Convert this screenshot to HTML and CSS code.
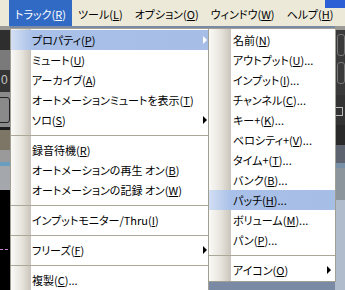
FILE: index.html
```html
<!DOCTYPE html>
<html lang="ja">
<head>
  <meta charset="UTF-8" />
  <title>トラック メニュー</title>
  <link rel="stylesheet" href="styles.css">
</head>
<body>
  <div class="screen">
    <div class="title-corner"></div>

    <div class="menubar">
      <span class="menubar-item active">トラック(<u>R</u>)</span>
      <span class="menubar-item">ツール(<u>L</u>)</span>
      <span class="menubar-item">オプション(<u>O</u>)</span>
      <span class="menubar-item">ウィンドウ(<u>W</u>)</span>
      <span class="menubar-item">ヘルプ(<u>H</u>)</span>
    </div>

    <div class="workspace">
      <!-- bits of the track view showing round the menus -->
      <div class="strip strip-left">
        <div class="band l1"></div>
        <div class="band l2"></div>
        <div class="band l3"></div>
        <div class="band l4"><span class="digit">0</span></div>
        <div class="band l5"><div class="knob"></div></div>
        <div class="band l6"></div>
        <div class="band l7"></div>
        <div class="band l8"></div>
        <div class="band l9"></div>
        <div class="band l10"></div>
        <div class="band l11"><div class="dash"></div></div>
      </div>
      <div class="strip-mid"></div>
      <div class="strip strip-right">
        <div class="band r1"></div>
        <div class="band r2"><div class="knob"></div><div class="knob"></div></div>
        <div class="band r3"><div class="box"></div></div>
        <div class="band r4"></div>
        <div class="band r5"></div>
        <div class="band r6"></div>
        <div class="band r7"></div>
        <div class="band r8"></div>
      </div>

      <!-- Track menu -->
      <div class="menu menu-main">
        <div class="item hl">プロパティ(<u>P</u>)<span class="arrow"></span></div>
        <div class="item">ミュート(<u>U</u>)</div>
        <div class="item">アーカイブ(<u>A</u>)</div>
        <div class="item">オートメーションミュートを表示(<u>T</u>)</div>
        <div class="item">ソロ(<u>S</u>)<span class="arrow"></span></div>
        <div class="sep"></div>
        <div class="item">録音待機(<u>R</u>)</div>
        <div class="item">オートメーションの再生 オン(<u>B</u>)</div>
        <div class="item">オートメーションの記録 オン(<u>W</u>)</div>
        <div class="sep"></div>
        <div class="item">インプットモニター/Thru(<u>I</u>)</div>
        <div class="sep"></div>
        <div class="item">フリーズ(<u>F</u>)<span class="arrow"></span></div>
        <div class="sep"></div>
        <div class="item">複製(<u>C</u>)...</div>
      </div>

      <!-- Properties submenu -->
      <div class="menu menu-sub">
        <div class="item">名前(<u>N</u>)</div>
        <div class="item">アウトプット(<u>U</u>)...</div>
        <div class="item">インプット(<u>I</u>)...</div>
        <div class="item">チャンネル(<u>C</u>)...</div>
        <div class="item">キー+(<u>K</u>)...</div>
        <div class="item">ベロシティ+(<u>V</u>)...</div>
        <div class="item">タイム+(<u>T</u>)...</div>
        <div class="item">バンク(<u>B</u>)...</div>
        <div class="item hl">パッチ(<u>H</u>)...</div>
        <div class="item">ボリューム(<u>M</u>)...</div>
        <div class="item">パン(<u>P</u>)...</div>
        <div class="sep"></div>
        <div class="item">アイコン(<u>O</u>)<span class="arrow"></span></div>
      </div>
    </div>
  </div>
</body>
</html>
```

FILE: styles.css
```css
* {
  box-sizing: border-box;
}

body {
  margin: 0;
  width: 345px;
  height: 290px;
  overflow: hidden;
  font-family: "Noto Sans CJK JP", sans-serif;
  font-size: 11px;
  font-feature-settings: "palt";
  color: #000;
  background: #000;
}

.screen {
  position: relative;
  width: 345px;
  height: 290px;
  overflow: hidden;
  display: flex;
  flex-direction: column;
}

/* corner of the window title bar */
.title-corner {
  position: absolute;
  top: 0;
  right: 0;
  width: 20px;
  height: 8px;
  background: #2c5fd6;
}

/* Menu bar */
.menubar {
  height: 26px;
  flex-shrink: 0;
  display: flex;
  padding-left: 9px;
  background: #ece9d8;
}

.menubar-item {
  display: flex;
  align-items: center;
  padding: 2px 6px 0 6px;
  white-space: nowrap;
}

.menubar-item.active {
  background: #316ac5;
  color: #fff;
}

/* Area under the menus */
.workspace {
  position: relative;
  flex: 1;
  display: flex;
}

.strip {
  width: 10px;
  display: flex;
  flex-direction: column;
}

.strip-mid {
  flex: 1;
  background: #7b8aa4;
}

.band {
  position: relative;
  flex-shrink: 0;
}

.l1 { height: 4px; background: #9c9a94; }
.l2 { height: 20px; background: #2e2e2e; }
.l3 { height: 20px; background: #7a7a7a; }
.l4 { height: 22px; background: #343434; }
.l5 { height: 35px; background: #8a8a8a; }
.l6 { height: 3px; background: #1c1c1c; }
.l7 { height: 20px; background: #7d7565; }
.l8 { height: 12px; background: #9a9a9a; }
.l9 { height: 4px; background: #6a9ec0; }
.l10 { height: 24px; background: #a4a8ac; }
.l11 { flex: 1; background: #000; }

.r1 { height: 4px; background: #9c9a94; }
.r2 { height: 65px; background: #3a3a3a; padding: 4px 0 0 2px; }
.r3 { height: 30px; background: #333; padding-top: 12px; }
.r4 { height: 20px; background: #2a2a2a; }
.r5 { height: 18px; background: #5d6470; }
.r6 { height: 5px; background: #7890a8; }
.r7 { height: 32px; background: #8c949c; }
.r8 { flex: 1; background: #b0bccc; }

.digit {
  display: block;
  padding: 3px 0 0 1px;
  color: #c8c8c8;
  font-family: "Liberation Sans", sans-serif;
  font-size: 12px;
}

.knob {
  height: 26px;
  margin: 5px 0 0 -4px;
  border: 1px solid #222;
  border-radius: 3px;
}

.strip-right .knob {
  height: 22px;
  margin: 0 0 6px 0;
  border-color: #777;
}

.box {
  width: 8px;
  height: 9px;
  border: 1px solid #bbb;
}

.dash {
  position: absolute;
  top: 59px;
  left: 0;
  width: 8px;
  border-top: 1px dashed #c77fd0;
}

/* Popup menus */
.menu {
  position: absolute;
  top: 2px;
  padding: 1px 0;
  border: 1px solid #a19e94;
  background-color: #fff;
  background-repeat: no-repeat;
}

.menu-main {
  left: 10px;
  width: 199px;
  background-image: linear-gradient(90deg, #fbfaf7 0%, #e6e3dc 55%, #c9c5bb 100%);
  background-size: 20px 100%;
}

.menu-sub {
  left: 208px;
  width: 128px;
  background-image: linear-gradient(90deg, #fbfaf7 0%, #e6e3dc 55%, #c9c5bb 100%);
  background-size: 22px 100%;
}

.item {
  position: relative;
  height: 20px;
  display: flex;
  align-items: center;
  padding-left: 21px;
  padding-bottom: 1px;
  white-space: nowrap;
}

.menu-sub .item {
  padding-left: 24px;
}

.item.hl {
  background: linear-gradient(90deg, #d3dff3 0px, #a9c0e8 22px, #a6bde6 100%);
}

.arrow {
  position: absolute;
  right: 1px;
  top: 6px;
  border-left: 4px solid #000;
  border-top: 4px solid transparent;
  border-bottom: 4px solid transparent;
}

.hl .arrow {
  border-left-color: #fff;
}

.menu-sub .arrow {
  right: 4px;
}

.sep {
  height: 10px;
  display: flex;
  align-items: center;
}

.sep::after {
  content: "";
  flex: 1;
  height: 1px;
  background: #aca899;
}
```
